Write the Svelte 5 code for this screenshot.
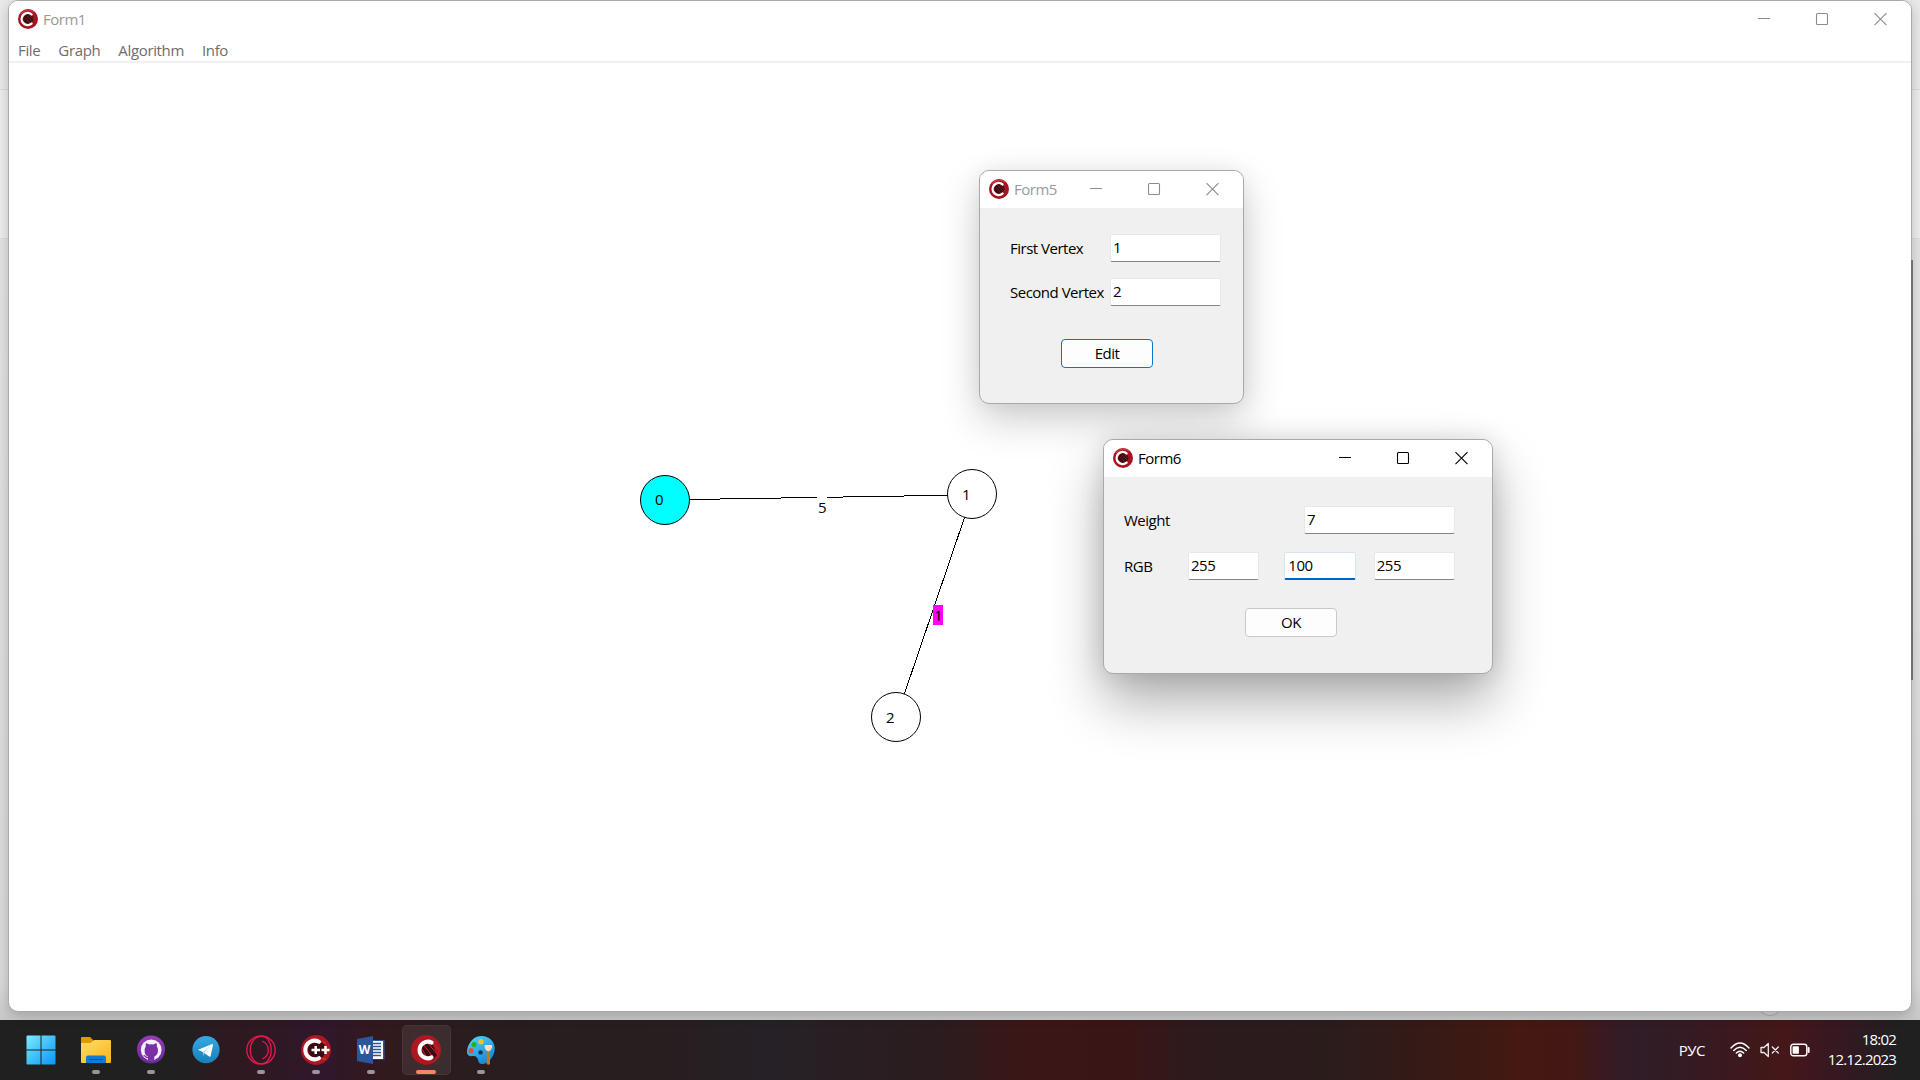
<script>
  const nodes = [
    { x: 665, y: 500, label: '0', tx: 655, ty: 505, fill: '#00ffff' },
    { x: 972, y: 494, label: '1', tx: 962, ty: 499.5, fill: '#ffffff' },
    { x: 896, y: 717, label: '2', tx: 886, ty: 722.5, fill: '#ffffff' }
  ];
  const menu = ['File', 'Graph', 'Algorithm', 'Info'];
</script>

{#snippet logo()}
  <svg class="logo" viewBox="0 0 20 20">
    <circle cx="10" cy="10" r="10" fill="#a31520" />
    <path d="M3 5A9 9 0 0 1 16 3" stroke="#cf3a45" stroke-width="1.2" fill="none" />
    <circle cx="10.3" cy="10" r="5" fill="#3a0d12" />
    <path d="M7.5 9L12 14M9 7L15 13M11 6L15 10" stroke="#8c1a24" stroke-width=".8" />
    <path d="M13.5 5.4A6 6 0 1 0 13.5 14.6" stroke="#fff" stroke-width="2.4" fill="none" stroke-linecap="round" />
  </svg>
{/snippet}

{#snippet controls()}
  <div class="controls">
    <svg viewBox="0 0 58 36"><path d="M23 17.5H35" /></svg>
    <svg viewBox="0 0 58 36"><rect x="23.5" y="12.5" width="11" height="11" rx="1" /></svg>
    <svg viewBox="0 0 58 36"><path d="M23.5 12.2L35.5 24.2M35.5 12.2L23.5 24.2" /></svg>
  </div>
{/snippet}

{#snippet titlebar(name)}
  <header class="titlebar">
    {@render logo()}
    <span class="name">{name}</span>
    {@render controls()}
  </header>
{/snippet}

<div class="desktop">
  <div class="backdrop">
    <div class="band one"></div>
    <div class="band two"></div>
    <div class="band three"></div>
    <div class="band four"></div>
  </div>
  <div class="knob"></div>

  <main class="window main inactive">
    {@render titlebar('Form1')}
    <nav class="menu">
      {#each menu as item}<span>{item}</span>{/each}
    </nav>
  </main>
  <div class="scroll"></div>

  <svg class="canvas" viewBox="0 0 1920 1020">
    <g shape-rendering="crispEdges" stroke="#000" fill="none">
      <path d="M665 499.9L972 494.9M972.5 494L896.5 717" />
    </g>
    <rect x="817" y="495" width="10" height="20" fill="#fff" />
    <rect x="933" y="605" width="10" height="20" fill="#ff00ff" />
    {#each nodes as n}
      <circle cx={n.x} cy={n.y} r="24.5" fill={n.fill} stroke="#000" />
      <text x={n.tx} y={n.ty}>{n.label}</text>
    {/each}
    <text x="818" y="513">5</text>
    <text x="934" y="621">1</text>
  </svg>

  <section class="window form5 inactive">
    {@render titlebar('Form5')}
    <div class="body">
      <div class="row"><label for="v1">First Vertex</label><input id="v1" value="1" /></div>
      <div class="row"><label for="v2">Second Vertex</label><input id="v2" value="2" /></div>
      <button class="default">Edit</button>
    </div>
  </section>

  <section class="window form6">
    {@render titlebar('Form6')}
    <div class="body">
      <div class="row"><label for="w">Weight</label><input id="w" value="7" /></div>
      <div class="row rgb">
        <label for="r">RGB</label>
        <input id="r" value="255" />
        <input class="focus" value="100" aria-label="Green" />
        <input class="blue" value="255" aria-label="Blue" />
      </div>
      <button>OK</button>
    </div>
  </section>

  <footer class="taskbar">
    <div class="apps">
      <div class="app">
        <svg viewBox="0 0 30 30">
          <defs><linearGradient id="win" gradientUnits="userSpaceOnUse" x1="0" y1="0" x2="30" y2="30"><stop offset="0" stop-color="#7eeeff" /><stop offset=".5" stop-color="#3fc0fb" /><stop offset="1" stop-color="#0795f8" /></linearGradient></defs>
          <path fill="url(#win)" d="M.5 1.5a1 1 0 0 1 1-1H14.5V14.5H.5zM15.5.5H28.5a1 1 0 0 1 1 1V14.5H15.5zM.5 15.5H14.5V29.5H1.5a1 1 0 0 1-1-1zM15.5 15.5H29.5V28.5a1 1 0 0 1-1 1H15.5z" />
        </svg>
      </div>
      <div class="app open">
        <svg viewBox="0 0 30 30">
          <defs><linearGradient id="fold" x1="0" y1="0" x2="1" y2="1"><stop offset="0" stop-color="#ffdc6a" /><stop offset="1" stop-color="#fbb616" /></linearGradient></defs>
          <path d="M0 3a1 1 0 0 1 1-1H9l3 3V9H0z" fill="#e09a00" />
          <path d="M0 8H9.5L13 5H29a1 1 0 0 1 1 1V27a1 1 0 0 1-1 1H1a1 1 0 0 1-1-1z" fill="url(#fold)" />
          <path d="M5 28V22.5A2 2 0 0 1 7 20.5H23a2 2 0 0 1 2 2V28z" fill="#0f7bd2" />
          <path d="M8.5 24.5H21.5" stroke="#06529b" stroke-linecap="round" />
        </svg>
      </div>
      <div class="app open">
        <svg viewBox="0 0 30 30">
          <defs><linearGradient id="git" x2="0" y2="1"><stop stop-color="#9a3bbb" /><stop offset="1" stop-color="#6a2b98" /></linearGradient></defs>
          <circle cx="15" cy="14.5" r="14" fill="url(#git)" />
          <circle cx="15.2" cy="14.8" r="10.4" fill="#f5f0f8" />
          <path d="M12 25.5V21.5C8.8 20.4 8.5 17.5 8.7 14.5C8.8 13 9.4 12 9.9 11.5C9.5 10.5 9.5 9.2 10.1 8.3C11.3 8.4 12.4 9 13.2 9.6Q15.3 9 17.4 9.6C18.2 9 19.3 8.4 20.5 8.3C21.1 9.2 21.1 10.5 20.7 11.5C21.3 12 21.8 13 21.9 14.5C22.1 17.5 21.5 20.4 18.3 21.5V25.5z" fill="#7a30a5" />
          <path d="M12.2 22.6C10 23.1 9.4 20.8 7.7 20.4" stroke="#7a30a5" fill="none" stroke-width="1.2" />
        </svg>
      </div>
      <div class="app">
        <svg viewBox="0 0 30 30">
          <defs><linearGradient id="tel" x2="0" y2="1"><stop stop-color="#34a9e5" /><stop offset="1" stop-color="#187fb8" /></linearGradient></defs>
          <circle cx="15" cy="14.7" r="13.6" fill="url(#tel)" />
          <path d="M7 14.8L21.2 9.1Q22.2 8.9 22 10.2L19.6 21.1Q19.3 22.3 18.2 21.6L11.8 17z" fill="#fff" />
          <path d="M11.8 17L18.6 11.6L13.2 17.9L12.8 21z" fill="#b7d8ea" />
        </svg>
      </div>
      <div class="app open">
        <svg viewBox="0 0 30 30" fill="none" stroke="#e31b4e" stroke-width="1.3">
          <circle cx="15" cy="15" r="14.2" />
          <path d="M16 1.3C8 1.3 4.2 8.5 4.2 15S8 28.7 16 28.7C21.5 28.7 25.3 22 25.3 15S21.5 1.3 16 1.3zM16.2 6C24.3 9.5 24.3 20.5 16.2 24" />
        </svg>
      </div>
      <div class="app open">
        <svg viewBox="0 0 30 30">
          <circle cx="15" cy="15" r="15" fill="#ad1722" />
          <circle cx="16" cy="15" r="9" fill="#3a0b11" />
          <path d="M10 3L25 8M15 23L25 24M3 10L10 26" stroke="#d72c38" stroke-width="1.3" />
          <path d="M18 6.8A9.3 9.3 0 1 0 18 23.2" stroke="#fff" stroke-width="4" fill="none" stroke-linecap="round" />
          <path d="M10.5 15H19M14.7 11V19M20.5 15H28.5M24.5 11V19" stroke="#fff" stroke-width="2.5" />
        </svg>
      </div>
      <div class="app open">
        <svg viewBox="0 0 30 30">
          <path d="M15 5H28a.6.6 0 0 1 .6.6V24a.6.6 0 0 1-.6.6H15z" fill="#2b579a" />
          <path d="M16 6H27V24H16z" fill="#fff" />
          <path d="M17 8.5H25M17 11.5H25M17 14.5H25M17 17.5H25M17 20.5H25" stroke="#2b579a" stroke-width="1.4" />
          <path d="M1 4L17 1V29L1 26z" fill="#2b579a" />
          <text class="word" x="2.8" y="19.3">W</text>
        </svg>
      </div>
      <div class="app open active">
        <svg viewBox="0 0 30 30">
          <circle cx="15" cy="15" r="15" fill="#ad1722" />
          <path d="M8 15C9 7 18 5 21 8L26 20L22 25L12 23z" fill="#3a0b11" />
          <path d="M12 9L22 22M15 6L27 20M18 4L29 16M10 13L17 24" stroke="#c92532" stroke-width="1" />
          <path d="M20.6 7.6A8.3 8.3 0 1 0 20.6 22.4" stroke="#fff" stroke-width="4" fill="none" stroke-linecap="round" />
        </svg>
      </div>
      <div class="app open">
        <svg viewBox="0 0 30 30">
          <defs><linearGradient id="pal" x2=".6" y2="1"><stop stop-color="#58d5ff" /><stop offset="1" stop-color="#1489db" /></linearGradient></defs>
          <path d="M15.5 1C23 1 28.5 6 28.7 13C28.7 21 23 29 16 29C11.5 29 13 24.5 10.5 22C8 19.8 5 22.5 2.3 20.3C-.2 18 1.3 12 3.5 8.5C6 4 10 1 15.5 1z" fill="url(#pal)" />
          <circle cx="15" cy="6.7" r="2.7" fill="#fbc115" /><circle cx="8" cy="9.6" r="2.6" fill="#23b12d" /><circle cx="5" cy="15.7" r="2.6" fill="#df5138" /><circle cx="14.6" cy="17.4" r="2.2" fill="#18324b" />
          <path d="M20.7 15H24V29Q22.3 30.5 20.7 29z" fill="#c77916" />
          <path d="M18.7 10H26V12.5Q25.5 15.5 22.4 16.5Q19.2 15.5 18.7 12.5z" fill="#f1e2c6" />
        </svg>
      </div>
    </div>
    <div class="tray">
      <span class="lang">РУС</span>
      <svg class="wifi" viewBox="0 0 20 16" fill="none" stroke="#fff" stroke-width="1.4" stroke-linecap="round">
        <path d="M1 6Q10-4 19 6M3.7 8.6Q10 1.9 16.3 8.6M6.3 11.1Q10 7.5 13.7 11.1" /><circle cx="10" cy="13.2" r="1.3" fill="#fff" />
      </svg>
      <svg class="sound" viewBox="0 0 20 16" fill="none" stroke="#eee" stroke-width="1.3" stroke-linejoin="round" stroke-linecap="round">
        <path d="M1 5.5H4L8.3 1.5V14.5L4 10.5H1zM12.3 5L18.3 11M18.3 5L12.3 11" />
      </svg>
      <svg class="battery" viewBox="0 0 20 16" fill="none" stroke="#fff" stroke-width="1.4">
        <rect x=".8" y="2.2" width="16" height="11.6" rx="2.6" /><rect x="2.6" y="4.2" width="6.3" height="7.6" rx=".8" fill="#fff" stroke="none" /><path d="M18.6 6V10" stroke-width="2" stroke-linecap="round" />
      </svg>
      <div class="clock"><span>18:02</span><span>12.12.2023</span></div>
    </div>
  </footer>
</div>

<style>
  :global(body) { margin: 0; overflow: hidden; }
  .desktop { position: relative; width: 1920px; height: 1080px; overflow: hidden; display: flex; flex-direction: column; font: 15px/20px "Open Sans", "Noto Sans", sans-serif; letter-spacing: -0.5px; color: #000; }
  .backdrop { height: 1020px; display: flex; flex-direction: column; background: #dedede; }
  .band { border-bottom: 1px solid #dadada; }
  .one { height: 89px; background: #e8e8e8; }
  .two { height: 148px; background: #ececec; }
  .three { height: 742px; background: linear-gradient(#e3e3e3, #dadada); }
  .four { flex: 1; border: 0; background: linear-gradient(#dadada, #c8c8c8); }
  .knob { position: absolute; left: 1757px; top: 990px; width: 24px; height: 24px; border: 1px solid #aaa; border-radius: 50%; background: #d5d5d5; }
  .scroll { position: absolute; left: 1911px; top: 260px; width: 2px; height: 420px; background: #707070; }
  .window { position: absolute; box-sizing: border-box; border: 1px solid #a9a9a9; border-radius: 10px; background: #f0f0f0; overflow: hidden; display: flex; flex-direction: column; }
  .main { left: 8px; top: 0; width: 1904px; height: 1012px; background: #fff; box-shadow: 0 4px 12px rgba(0,0,0,.2); }
  .form5 { left: 979px; top: 170px; width: 265px; height: 234px; box-shadow: 0 16px 40px rgba(0,0,0,.2), 0 0 20px rgba(0,0,0,.06); }
  .form6 { left: 1103px; top: 439px; width: 390px; height: 235px; box-shadow: 0 28px 54px rgba(0,0,0,.32), 0 0 24px rgba(0,0,0,.12); }
  .titlebar { height: 37px; flex: none; display: flex; align-items: flex-start; background: #fff; padding: 0 2px 0 9px; }
  .logo { width: 20px; height: 20px; margin-top: 8px; flex: none; }
  .name { margin: 8px 0 0 5px; }
  .inactive .name { color: #999; }
  .controls { display: flex; margin-left: auto; }
  .controls svg { width: 58px; height: 36px; stroke: #000; stroke-width: 1.1; fill: none; }
  .inactive .controls svg { stroke: #8c8c8c; }
  .menu { height: 23px; flex: none; display: flex; gap: 18px; padding: 0 9px; border-bottom: 2px solid #f0f0f0; color: #6d6d6d; line-height: 25px; letter-spacing: -0.35px; }
  .canvas { position: absolute; left: 0; top: 0; width: 1920px; height: 1020px; }
  .body { display: flex; flex-direction: column; flex: 1; }
  .row { display: flex; align-items: flex-start; }
  .row label { line-height: 28px; }
  input { box-sizing: border-box; height: 28px; padding: 0 0 3px 2px; border: 1px solid #e8e8e8; border-bottom: 1px solid #858585; border-radius: 2px; background: #fff; font: inherit; letter-spacing: inherit; color: #000; outline: 0; min-width: 0; }
  input.focus { border-color: #d8e4ef; border-bottom: 2px solid #0067c0; padding-bottom: 2px; padding-left: 3px; }
  button { box-sizing: border-box; width: 92px; height: 29px; border: 1px solid #c8c8c8; border-radius: 4px; background: #fdfdfd; font: inherit; letter-spacing: inherit; padding: 0 0 2px; color: #000; }
  button.default { border-color: #0078d4; }
  .form5 .body { padding: 26px 22px 0 30px; gap: 16px; }
  .form5 .row { justify-content: space-between; }
  .form5 input { width: 111px; }
  .form5 button { margin: 17px 0 0 51px; }
  .form6 .body { padding: 29px 37px 0 20px; gap: 18px; }
  .form6 .row { justify-content: space-between; }
  .form6 .row input { width: 151px; }
  .form6 .rgb { justify-content: flex-start; }
  .form6 .rgb label { width: 64px; flex: none; }
  .form6 .rgb input { width: 72px; }
  .form6 .rgb .focus { margin-left: 25px; }
  .form6 .rgb .blue { margin-left: 18px; width: 82px; }
  .form6 button { margin: 10px 0 0 121px; }
  .taskbar { height: 60px; display: flex; justify-content: space-between; color: #fff; background: linear-gradient(90deg, #202020 0, #202020 9%, #2e191f 12%, #30172b 17%, #32191d 20%, #291d1e 24%, #271e20 35%, #262127 40%, #2b1c1e 49%, #3a1717 53%, #3b1515 58%, #2c1b1d 63%, #2b1c1c 69%, #351a17 74%, #441911 79%, #431815 82%, #301c29 85%, #371a20 89%, #451718 93%, #341822 96%, #202020 99%); }
  .apps { display: flex; padding: 5px 0 0 16.5px; gap: 6px; }
  .app { position: relative; width: 49px; height: 50px; box-sizing: border-box; display: flex; justify-content: center; padding-top: 10px; }
  .app svg { width: 30px; height: 30px; }
  .app.open::after { content: ""; position: absolute; left: 20.5px; bottom: 1px; width: 8px; height: 4px; border-radius: 2px; background: #9b9498; }
  .app.active { border-radius: 5px; background: rgba(255,255,255,.08); box-shadow: inset 0 0 0 1px rgba(255,255,255,.05); }
  .app.active::after { left: 14.5px; width: 20px; background: #f5866a; }
  .word { font: bold 12px "Open Sans", sans-serif; fill: #fff; letter-spacing: 0; }
  .tray { display: flex; align-items: center; padding-right: 24px; }
  .tray svg { width: 20px; height: 16px; }
  .lang { margin-right: 25px; }
  .tray .sound, .tray .battery { margin-left: 10px; }
  .clock { margin-left: 19px; width: 67px; display: flex; flex-direction: column; align-items: flex-end; letter-spacing: -0.82px; margin-top: -2px; }
</style>
